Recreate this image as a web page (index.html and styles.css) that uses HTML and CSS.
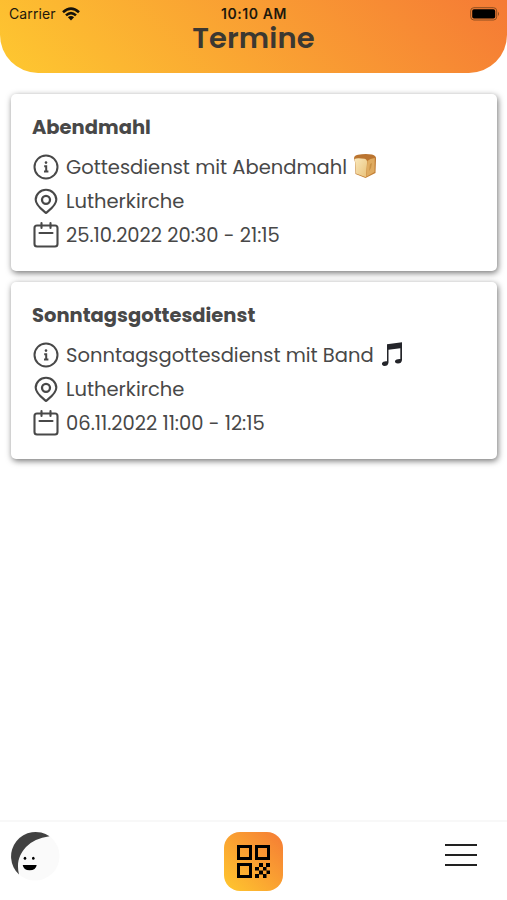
FILE: index.html
```html
<!DOCTYPE html>
<html lang="de">
<head>
<meta charset="utf-8">
<meta name="viewport" content="width=device-width, initial-scale=1">
<title>Termine</title>
<link rel="stylesheet" href="styles.css">
</head>
<body>
<svg class="symbols" aria-hidden="true">
  <symbol id="info" viewBox="0 0 28 28"><g fill="none" stroke="currentColor" stroke-width="2"><circle cx="14" cy="14" r="11.5"/><path d="M12.2 13.2h2v5.2M12 18.6h4.4"/></g><circle cx="14" cy="9.6" r="1.3" fill="currentColor"/></symbol>
  <symbol id="pin" viewBox="0 0 28 28"><g fill="none" stroke="currentColor" stroke-width="2.1" stroke-linejoin="round"><path d="M14 26C11.5 23.500 3.7 18.700 3.7 12.700a10.3 9.900 0 0 1 20.600 0C24.300 18.700 16.500 23.500 14 26Z"/><circle cx="14" cy="12.800" r="4" stroke-width="2.300"/></g></symbol>
  <symbol id="calendar" viewBox="0 0 28 28"><g fill="none" stroke="currentColor" stroke-width="2.1" stroke-linecap="round"><rect x="2.500" y="4.500" width="23" height="21" rx="2.500"/><path d="M9.500 2v5M18.500 2v5M7.500 12h13"/></g></symbol>
</svg>
<header class="header">
  <div class="status">
    <div class="carrier"><span>Carrier</span>
      <svg class="wifi" viewBox="0 0 18 14"><g fill="none" stroke="#16120a" stroke-width="2.600"><path d="M1 5.200Q9-2 17 5.200M4 8.400Q9 3.800 14 8.400"/></g><path d="M5.900 10.300Q9 7.700 12.100 10.300L9 13.500Z" fill="#16120a"/></svg>
    </div>
    <div class="clock">10:10 AM</div>
    <svg class="battery" viewBox="0 0 30 14"><rect x=".7" y=".7" width="26" height="12.300" rx="3.200" fill="none" stroke="#8d4e20"/><rect x="2.200" y="2.200" width="23" height="9.300" rx="1.800" fill="#000"/><path d="M28 4.700Q30 6.900 28 9.100Z" fill="#8d4e20"/></svg>
  </div>
  <h1 class="title">Termine</h1>
</header>
<main class="events">
  <article class="card">
    <h2 class="name">Abendmahl</h2>
    <div class="row"><svg class="icon"><use href="#info"/></svg><span>Gottesdienst mit Abendmahl</span>
      <svg class="emoji" viewBox="0 0 24 26"><defs><linearGradient id="crumb" x2="1" y2="1"><stop stop-color="#fae9bd"/><stop offset="1" stop-color="#e9c27a"/></linearGradient><linearGradient id="crust" x2="0" y2="1"><stop stop-color="#b9732f"/><stop offset="1" stop-color="#c58236"/></linearGradient></defs><path d="M1 5.500Q1 2.500 5 1.800Q12 .3 19 1.500Q23.500 2.500 23 6L22.500 20L12.500 25L2.500 21L2 9Z" fill="url(#crust)"/><path d="M1.500 6Q4 4.500 11.500 5.800Q14.500 6.500 14 10L13 24.300L3 20.500L2.200 9Z" fill="url(#crumb)"/><path d="M14.300 8Q17 5.500 21.800 5L21.500 19L13.300 23.800Z" fill="#dfab60"/><path d="M17 11l2-1-1 5-2 3Z" fill="#c99245"/></svg>
    </div>
    <div class="row"><svg class="icon"><use href="#pin"/></svg><span>Lutherkirche</span></div>
    <div class="row"><svg class="icon"><use href="#calendar"/></svg><time>25.10.2022 20:30 - 21:15</time></div>
  </article>
  <article class="card">
    <h2 class="name">Sonntagsgottesdienst</h2>
    <div class="row"><svg class="icon"><use href="#info"/></svg><span>Sonntagsgottesdienst mit Band</span>
      <svg class="emoji note" viewBox="0 0 24 26"><path d="M7 3.200L22 1.200V19Q21.500 22.500 18 22.500Q14.500 22.300 15 19.800Q16 17.800 20.300 18V7.200L8.500 8.800V21.500Q8 25 4.500 25Q1.500 24.500 2 22Q3 19.800 7 20.200Z" fill="#24252a"/></svg>
    </div>
    <div class="row"><svg class="icon"><use href="#pin"/></svg><span>Lutherkirche</span></div>
    <div class="row"><svg class="icon"><use href="#calendar"/></svg><time>06.11.2022 11:00 - 12:15</time></div>
  </article>
</main>
<nav class="tabs">
  <svg class="avatar" viewBox="0 0 50 50"><circle cx="25" cy="25" r="24.500" fill="#fafafa"/><path d="M39.500 5.300A24.500 24.500 0 0 0 9 43.500C6 31 10 22.500 16 16Q24 7.500 39.500 5.300Z" fill="#414141"/><ellipse cx="15" cy="27.300" rx="1.300" ry="1.500"/><ellipse cx="23.300" cy="27.300" rx="1.300" ry="1.500"/><path d="M12.700 34h14q-.8 5.300-7 5.300t-7-5.300Z"/></svg>
  <div class="scan">
    <svg class="qr" viewBox="0 0 33 33"><g fill="none" stroke="#000" stroke-width="3"><path d="M1.500 1.500h12v12h-12zM19.500 1.500h12v12h-12zM1.500 19.500h12v12h-12z"/></g><path d="M22 18h4v4h-4zM29 18h4v4h-4zM18 22h4v3.500h-4zM26 22h3.500v3.500H26zM22 25.500h4v4h-4zM29.500 25.500H33V29h-3.500zM18 29h4v4h-4zM26 29h3.500v4H26z"/></svg>
  </div>
  <svg class="menu" viewBox="0 0 34 24"><path d="M1 2h32M1 12h32M1 22h32" stroke="#222" stroke-width="2.200"/></svg>
</nav>
</body>
</html>
```
FILE: styles.css
```css
* { box-sizing: border-box; }
body {
  margin: 0;
  height: 900px;
  display: flex;
  flex-direction: column;
  background: #fff;
  color: #484848;
  font-family: Poppins, Inter, sans-serif;
  overflow: hidden;
  white-space: nowrap;
}
.symbols { display: none; }
.header {
  height: 73px;
  flex: none;
  border-radius: 0 0 38px 38px;
  background: linear-gradient(45deg, #fec830 0%, #f57a35 100%);
}
.status {
  height: 22px;
  padding: 5px 7px 0 9px;
  display: grid;
  grid-template-columns: 1fr auto 1fr;
  align-items: center;
  color: #1e180c;
  font: 14px/17px Inter, sans-serif;
}
.carrier { display: flex; align-items: center; gap: 6px; letter-spacing: 0.1px; }
.wifi { width: 18px; height: 14px; }
.clock { font-weight: 600; letter-spacing: 0.55px; margin-right: 1px; }
.battery { width: 30px; height: 14px; justify-self: end; }
.title {
  margin: 0;
  text-align: center;
  font-size: 29px;
  line-height: 32px;
  font-weight: 600;
  letter-spacing: 0.1px;
  color: #3c3831;
}
.events {
  flex: 1;
  padding: 21px 10px 0 11px;
  display: flex;
  flex-direction: column;
  gap: 11px;
}
.card {
  height: 177px;
  padding: 20px 21px;
  border-radius: 5px;
  background: #fff;
  box-shadow: 1px 2px 6px rgba(0, 0, 0, 0.55);
}
.name { margin: 0 0 8px; font-size: 19.5px; line-height: 28px; font-weight: 700; }
.row {
  height: 34px;
  display: flex;
  align-items: center;
  font-size: 19.5px;
  line-height: 32px;
}
.row span, .row time { margin-top: 1px; }
.icon { width: 28px; height: 28px; margin-right: 6px; flex: none; }
.emoji { width: 24px; height: 26px; margin: 0 0 2px 6px; }
.note { margin-left: 6px; }
.tabs {
  height: 80px;
  flex: none;
  padding: 9px 29px 0 10px;
  border-top: 2px solid #f8f8f8;
  display: grid;
  grid-template-columns: 1fr auto 1fr;
  align-items: start;
}
.avatar { width: 50px; height: 50px; }
.scan {
  width: 59px;
  height: 59px;
  margin-left: 19px;
  margin-top: 1px;
  display: grid;
  place-items: center;
  border-radius: 16px;
  background: linear-gradient(45deg, #ffc82e, #f57b35);
}
.qr { width: 33px; height: 33px; }
.menu { width: 34px; height: 24px; margin-top: 12px; justify-self: end; }
```
